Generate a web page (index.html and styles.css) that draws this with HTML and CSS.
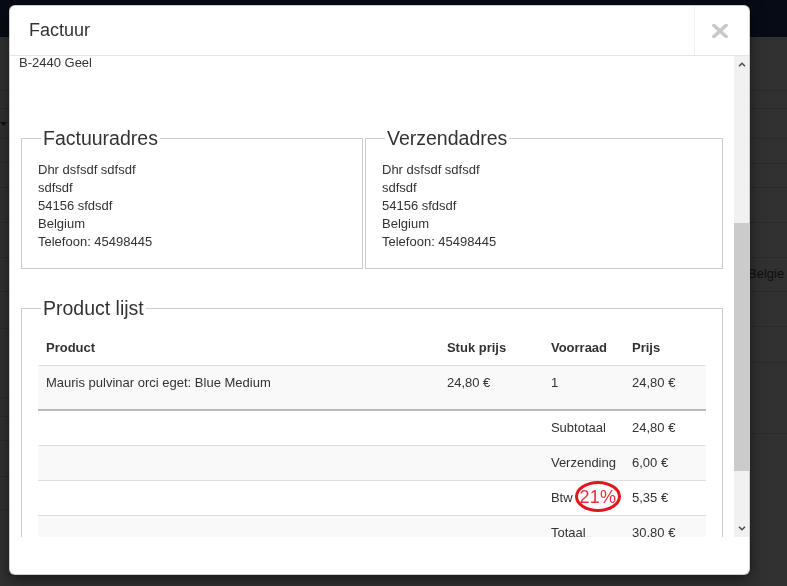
FILE: index.html
```html
<!DOCTYPE html>
<html lang="nl">
<head>
<meta charset="utf-8">
<title>Factuur</title>
<link rel="stylesheet" href="styles.css">
</head>
<body>
<div class="page">
  <div class="topbar"></div>
  <div class="page-grid">
    <div class="col col-left">
      <div></div>
      <div></div>
      <div class="caret-row"><svg class="caret" width="7" height="4" viewBox="0 0 7 4"><path d="M0 0H7L3.5 4Z" fill="#111"/></svg></div>
      <div></div><div></div><div></div><div></div><div></div><div></div><div></div><div></div><div></div><div></div><div></div>
    </div>
    <div class="col col-right">
      <div></div><div></div><div></div><div></div><div></div><div></div><div></div>
      <div class="country">Belgie</div>
      <div></div><div></div><div></div>
    </div>
  </div>
</div>

<div class="modal">
  <div class="modal-header">
    <h4 class="modal-title">Factuur</h4>
    <button class="close" type="button" aria-label="Sluiten">
      <svg width="16" height="14" viewBox="0 0 16 14"><path d="M2 1.5L14 12.5M14 1.5L2 12.5" stroke="#c8c8c8" stroke-width="3.6" stroke-linecap="square" fill="none"/></svg>
    </button>
  </div>

  <div class="modal-body">
    <div class="viewport">
      <div class="content">
        <div class="shop-addr">B-2440 Geel</div>

        <div class="addresses">
          <fieldset>
            <legend>Factuuradres</legend>
            <div class="addr">
              <div>Dhr dsfsdf sdfsdf</div>
              <div>sdfsdf</div>
              <div>54156 sfdsdf</div>
              <div>Belgium</div>
              <div>Telefoon: 45498445</div>
            </div>
          </fieldset>
          <fieldset>
            <legend>Verzendadres</legend>
            <div class="addr">
              <div>Dhr dsfsdf sdfsdf</div>
              <div>sdfsdf</div>
              <div>54156 sfdsdf</div>
              <div>Belgium</div>
              <div>Telefoon: 45498445</div>
            </div>
          </fieldset>
        </div>

        <fieldset class="products">
          <legend>Product lijst</legend>
          <table class="product-table">
            <colgroup>
              <col class="c-product"><col class="c-unit"><col class="c-stock"><col class="c-price">
            </colgroup>
            <thead>
              <tr><th>Product</th><th>Stuk prijs</th><th>Voorraad</th><th>Prijs</th></tr>
            </thead>
            <tbody>
              <tr class="item"><td>Mauris pulvinar orci eget: Blue Medium</td><td>24,80 €</td><td>1</td><td>24,80 €</td></tr>
              <tr class="first-sum"><td></td><td></td><td>Subtotaal</td><td>24,80 €</td></tr>
              <tr><td></td><td></td><td>Verzending</td><td>6,00 €</td></tr>
              <tr><td></td><td></td><td class="btw-cell">Btw<span class="vat-mark">21%</span></td><td>5,35 €</td></tr>
              <tr><td></td><td></td><td>Totaal</td><td>30,80 €</td></tr>
            </tbody>
          </table>
        </fieldset>
      </div>
    </div>
    <div class="scrollbar">
      <span class="sb-btn"><svg width="8" height="5" viewBox="0 0 8 5"><path d="M1 4.3L4 1.3L7 4.3" stroke="#505050" stroke-width="1.6" fill="none"/></svg></span>
      <span class="sb-track"><span class="sb-thumb"></span></span>
      <span class="sb-btn"><svg width="8" height="5" viewBox="0 0 8 5"><path d="M1 0.7L4 3.7L7 0.7" stroke="#505050" stroke-width="1.6" fill="none"/></svg></span>
    </div>
  </div>
  <div class="modal-footer"></div>
</div>
</body>
</html>
```

FILE: styles.css
```css
* { box-sizing: border-box; }

html, body {
  margin: 0;
  height: 100%;
}

body {
  background: #313131;
  font-family: "Liberation Sans", Arial, sans-serif;
  font-size: 13px;
  color: #333;
  overflow: hidden;
}

/* dimmed page behind the dialog */
.topbar {
  height: 37px;
  background: #060b15;
}

.page-grid {
  display: grid;
  grid-template-columns: 352px 1fr;
}

.col {
  display: grid;
}

.col > div {
  border-bottom: 1px solid #2a2a2a;
}

.col-left {
  grid-template-rows: 54px 18px 30px 24px 25px 35px 35px 34px 37px 69px 19px 24px 36px 33px;
}

.col-right {
  border-left: 1px solid #222;
  grid-template-rows: 54px 18px 30px 25px 24px 35px 35px 34px 35px 36px 71px;
}

.caret-row {
  padding-top: 13px;
}

.caret {
  display: block;
}

.country {
  padding: 7px 0 0 395px;
  line-height: 18px;
  color: #0d0d0d;
}

/* dialog */
.modal {
  position: fixed;
  left: 9px;
  top: 5px;
  width: 741px;
  height: 570px;
  background: #fff;
  border: 1px solid rgba(0, 0, 0, .2);
  border-radius: 6px;
  box-shadow: 0 5px 15px rgba(0, 0, 0, .5);
  display: flex;
  flex-direction: column;
  overflow: hidden;
}

.modal-header {
  flex: none;
  display: flex;
  height: 50px;
  border-bottom: 1px solid #e5e5e5;
}

.modal-title {
  flex: 1;
  margin: 0;
  padding: 14px 0 0 19px;
  font-size: 18px;
  line-height: 20px;
  font-weight: normal;
  color: #333;
}

.close {
  width: 55px;
  padding: 0 5px 0 0;
  border: 0;
  border-left: 1px solid #eee;
  background: none;
  display: flex;
  align-items: center;
  justify-content: center;
}

.close svg {
  display: block;
}

.modal-body {
  flex: none;
  height: 481px;
  display: flex;
}

.viewport {
  flex: 1;
  overflow: hidden;
}

.content {
  padding: 0 11px;
  margin-top: -2px;
}

.shop-addr {
  margin-left: -2px;
  line-height: 18px;
}

.addresses {
  display: grid;
  grid-template-columns: 342px 1fr;
  gap: 2px;
  margin-top: 52px;
}

fieldset {
  margin: 0;
  min-width: 0;
  border: 1px solid #ccc;
  padding: 9px 16px 17px;
}

legend {
  margin-left: 3px;
  padding: 0 2px;
  font-size: 19.5px;
  line-height: 28px;
  color: #333;
}

.addr {
  line-height: 18px;
}

.products {
  margin-top: 25px;
}

/* product table */
.product-table {
  width: 100%;
  border-collapse: collapse;
}

.c-product { width: 401px; }
.c-unit { width: 104px; }
.c-stock { width: 81px; }
.c-price { width: 82px; }

.product-table th,
.product-table td {
  padding: 8px;
  line-height: 18px;
  text-align: left;
  vertical-align: top;
}

.product-table th {
  font-weight: bold;
  border-bottom: 1px solid #ddd;
}

.product-table td {
  border-top: 1px solid #ddd;
}

.product-table tbody tr:nth-child(odd) td {
  background: #f9f9f9;
}

.product-table .item td {
  padding-bottom: 17px;
}

.product-table .first-sum td {
  border-top: 2px solid #bbb;
}

.btw-cell {
  position: relative;
}

/* hand-drawn style ring around the VAT rate */
.vat-mark {
  position: absolute;
  left: 32px;
  top: 0;
  width: 46px;
  height: 31px;
  border: 3px solid #e3151e;
  border-radius: 50%;
  color: #ef2a3b;
  font-size: 18px;
  line-height: 26px;
  text-align: center;
  letter-spacing: 0.3px;
}

/* scrollbar of the dialog body */
.scrollbar {
  flex: none;
  width: 15px;
  background: #f1f1f1;
  display: flex;
  flex-direction: column;
}

.sb-btn {
  height: 17px;
  display: flex;
  align-items: center;
  justify-content: center;
}

.sb-btn svg {
  display: block;
}

.sb-track {
  flex: 1;
  padding-top: 150px;
}

.sb-thumb {
  display: block;
  height: 248px;
  background: #cbcbcb;
}

.modal-footer {
  flex: 1;
}
```
